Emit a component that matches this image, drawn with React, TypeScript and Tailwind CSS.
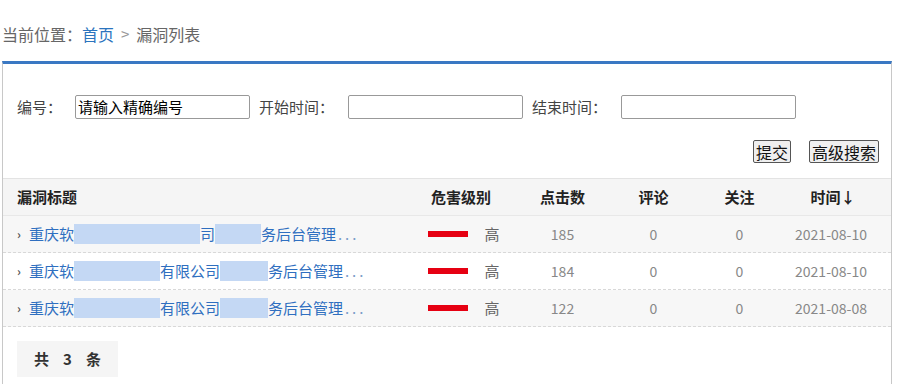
import React from 'react'

const font = { fontFamily: '"Noto Sans CJK SC", "Noto Sans", sans-serif' }

type Row = { parts: { t: string; blur?: number }[]; clicks: number; date: string; alt: boolean }

const rows: Row[] = [
  {
    parts: [{ t: '重庆软' }, { t: '', blur: 126 }, { t: '司' }, { t: '', blur: 46 }, { t: '务后台管理' }],
    clicks: 185,
    date: '2021-08-10',
    alt: true,
  },
  {
    parts: [{ t: '重庆软' }, { t: '', blur: 86 }, { t: '有限公司' }, { t: '', blur: 48 }, { t: '务后台管理' }],
    clicks: 184,
    date: '2021-08-10',
    alt: false,
  },
  {
    parts: [{ t: '重庆软' }, { t: '', blur: 86 }, { t: '有限公司' }, { t: '', blur: 48 }, { t: '务后台管理' }],
    clicks: 122,
    date: '2021-08-08',
    alt: true,
  },
]

const cols = 'grid grid-cols-[405px_106px_97px_85px_87px_1fr] items-center'

function Field({ label, value, labelW }: { label: string; value?: string; labelW: string }) {
  return (
    <div className="flex items-center">
      <span className={`${labelW} text-[15px] text-[#444]`}>{label}</span>
      <div className="flex h-[24px] w-[175px] items-center rounded-[2px] border border-[#999] bg-white px-[2px] text-[15px] text-black">
        {value}
      </div>
    </div>
  )
}

export default function App() {
  return (
    <div className="h-[384px] w-[905px] overflow-hidden bg-white" style={font}>
      <div className="flex h-[61px] items-center pl-[2px] pt-[7px] text-[16px] text-[#666]">
        当前位置：<span className="text-[#2b74be]">首页</span>
        <span className="mx-[7px] text-[15px] text-[#999]">&gt;</span>漏洞列表
      </div>

      <div className="ml-[2px] w-[890px] border-x border-t-[3px] border-x-[#c8c8c8] border-t-[#3a78c3] pb-[20px]">
        <div className="flex items-center gap-[9px] pl-[14px] pt-[31px]">
          <Field label="编号：" value="请输入精确编号" labelW="w-[58px]" />
          <Field label="开始时间：" labelW="w-[89px]" />
          <Field label="结束时间：" labelW="w-[89px]" />
        </div>

        <div className="flex justify-end gap-[18px] pr-[12px] pt-[21px]">
          <button className="h-[23px] rounded-[2px] border border-[#555] bg-[#efefef] px-[2px] text-[16px] leading-none text-[#111]">
            提交
          </button>
          <button className="h-[23px] rounded-[2px] border border-[#555] bg-[#efefef] px-[2px] text-[16px] leading-none text-[#111]">
            高级搜索
          </button>
        </div>

        <div className="mt-[15px] border-t border-[#e3e3e3]">
          <div className={`${cols} h-[37px] border-b border-[#e8e8e8] bg-[#f5f5f5] text-[15px] font-bold text-[#222]`}>
            <div className="pl-[14px]">漏洞标题</div>
            <div className="text-center">危害级别</div>
            <div className="text-center">点击数</div>
            <div className="text-center">评论</div>
            <div className="text-center">关注</div>
            <div className="pr-[8px] text-center">时间↓</div>
          </div>

          {rows.map((r, i) => (
            <div
              key={i}
              className={`${cols} h-[37px] border-b border-dashed border-[#d8d8d8] text-[14px] ${
                r.alt ? 'bg-[#f7f7f7]' : 'bg-white'
              }`}
            >
              <div className="flex items-center pl-[14px] text-[15px] text-[#2f6fc0]">
                <span className="mr-[8px] text-[12px] font-bold text-[#555]">›</span>
                {r.parts.map((p, j) =>
                  p.blur ? (
                    <span key={j} className="inline-block h-[20px] bg-[#c4d8f4]" style={{ width: p.blur }} />
                  ) : (
                    <span key={j}>{p.t}</span>
                  ),
                )}
                <span className="ml-[2px] tracking-[3px] text-[#7a9cc8]">...</span>
              </div>
              <div className="flex items-center justify-center gap-[16px] pl-[6px]">
                <span className="h-[6px] w-[40px] bg-[#e60012]" />
                <span className="text-[15px] text-[#666]">高</span>
              </div>
              <div className="text-center text-[#888]">{r.clicks}</div>
              <div className="text-center text-[#888]">0</div>
              <div className="text-center text-[#888]">0</div>
              <div className="pr-[12px] text-center text-[#888]">{r.date}</div>
            </div>
          ))}

          <div className="pl-[14px] pt-[14px]">
            <div className="flex h-[36px] w-[101px] items-center justify-center gap-[14px] bg-[#f5f5f5] text-[15px] font-bold text-[#333]">
              <span>共</span>
              <span>3</span>
              <span>条</span>
            </div>
          </div>
        </div>
      </div>
    </div>
  )
}
